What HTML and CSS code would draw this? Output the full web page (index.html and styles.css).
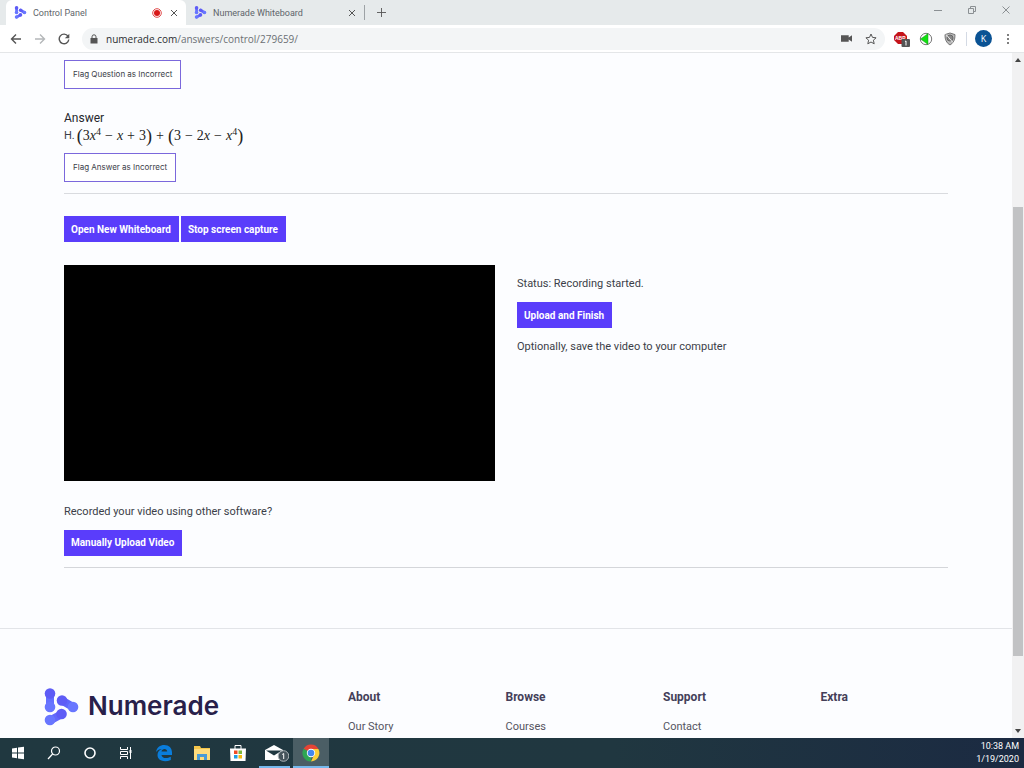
FILE: index.html
```html
<!DOCTYPE html>
<html lang="en">
<head>
<meta charset="utf-8">
<title>Control Panel</title>
<link rel="stylesheet" href="styles.css">
</head>
<body>
<svg class="defs" aria-hidden="true">
  <symbol id="mark" viewBox="0 0 35 38">
    <g fill="none" stroke-linecap="round" stroke-width="8">
      <path d="M6 6v12.500" stroke="#6470ff"/>
      <path d="M18 12.500l11 6.500" stroke="#5f66fb"/>
      <path d="M6 32.500l11-6" stroke="#6268fb"/>
    </g>
    <g fill="#5e5cf6"><circle cx="6" cy="5.500" r="5.300"/><circle cx="18" cy="12.500" r="5.300"/><circle cx="17.500" cy="26" r="5.300"/></g>
    <g fill="#6876ff"><circle cx="6" cy="19" r="5.300"/><circle cx="29" cy="19" r="5.300"/><circle cx="6" cy="32" r="5.300"/></g>
  </symbol>
</svg>
<header class="tabs">
  <div class="tab active">
    <svg class="fav"><use href="#mark"/></svg><span class="tab-title">Control Panel</span>
    <svg class="rec" viewBox="0 0 10 10"><circle cx="5" cy="5" r="4.300" fill="#fff" stroke="#e04848"/><circle cx="5" cy="5" r="3" fill="#d81818"/></svg>
    <button class="icon close" aria-label="Close Control Panel"><svg viewBox="0 0 8 8"><path d="M1 1l6 6M7 1L1 7"/></svg></button>
  </div>
  <div class="tab second">
    <svg class="fav"><use href="#mark"/></svg><span class="tab-title">Numerade Whiteboard</span>
    <button class="icon close" aria-label="Close Numerade Whiteboard"><svg viewBox="0 0 8 8"><path d="M1 1l6 6M7 1L1 7"/></svg></button>
  </div>
  <button class="icon plus" aria-label="New tab"><svg viewBox="0 0 10 10"><path d="M5 0v10M0 5h10"/></svg></button>
  <div class="window-controls">
    <button class="icon" aria-label="Minimize"><svg viewBox="0 0 10 10"><path d="M1 5.500h8"/></svg></button>
    <button class="icon" aria-label="Restore"><svg viewBox="0 0 10 10"><path d="M1.500 3.500h5v5h-5zM3.500 3V1.500h5v5H7"/></svg></button>
    <button class="icon" aria-label="Close window"><svg viewBox="0 0 10 10"><path d="M1.500 1.500l7 7M8.500 1.500l-7 7"/></svg></button>
  </div>
</header>
<nav class="toolbar">
  <button class="icon nav" aria-label="Back"><svg viewBox="0 0 12 12"><path d="M11 6H1.500M6 1.500L1.500 6 6 10.500"/></svg></button>
  <button class="icon nav dim" aria-label="Forward"><svg viewBox="0 0 12 12"><path d="M1 6h9.500M6 1.500L10.500 6 6 10.500"/></svg></button>
  <button class="icon nav" aria-label="Reload"><svg viewBox="0 0 12 12"><path d="M10 3.200A4.800 4.800 0 1 0 10.800 6.500"/><path d="M11.300.8v4.500H6.800z" class="solid"/></svg></button>
  <div class="address">
    <svg class="lock" viewBox="0 0 8 10"><path d="M2 4V2.800a2 2 0 0 1 4 0V4" fill="none" stroke="#555"/><path d="M.5 4h7v5.500h-7z" fill="#555"/></svg>
    <a class="url" href="#"><b>numerade.com</b>/answers/control/279659/</a>
    <svg class="cam" viewBox="0 0 10 8"><path d="M0 1h7v2l3-2v6L7 5v2H0z" fill="#555"/></svg>
    <button class="icon" aria-label="Bookmark"><svg viewBox="0 0 12 12"><path d="M6 1l1.500 3.400 3.600.4-2.700 2.400.8 3.600L6 9l-3.200 1.800.8-3.600L.9 4.800l3.600-.4z" stroke-width="1"/></svg></button>
  </div>
  <div class="extensions">
    <button class="icon ext" aria-label="Ad blocker"><svg viewBox="0 0 16 16"><path d="M4 1h5l4 4v4l-4 4H4L0 9V5z" fill="#c5141b" stroke="none"/><text x="1" y="9" class="abp">ABP</text><rect x="7.500" y="8" width="8.500" height="8" rx="1" fill="#555" stroke="none"/><path d="M11 10.500l1-.5v4.500" stroke="#fff"/></svg></button>
    <button class="icon ext" aria-label="Audio"><svg viewBox="0 0 16 16"><circle cx="8" cy="8" r="5.700" fill="#fff" stroke="#777"/><path d="M10 2.500v11L6 10.500 2.500 8 6 5.500z" fill="#10e010" stroke="#189018" stroke-width=".5"/></svg></button>
    <button class="icon ext" aria-label="Shield"><svg viewBox="0 0 16 16"><path d="M8 2l5 1.600c.2 5-1.500 8.400-5 10.400-3.500-2-5.200-5.400-5-10.400z" fill="#bbb" stroke="#777"/><circle cx="8" cy="7" r="3" fill="#888" stroke="#666"/><path d="M4 3.500l7 8" stroke="#eee"/></svg></button>
    <span class="divider"></span>
    <button class="avatar">K</button>
    <button class="icon more" aria-label="Menu"><svg viewBox="0 0 4 12"><g fill="#555" stroke="none"><circle cx="2" cy="2" r="1"/><circle cx="2" cy="6" r="1"/><circle cx="2" cy="10" r="1"/></g></svg></button>
  </div>
</nav>
<div class="viewport">
  <div class="page">
    <main class="content">
      <button class="flag">Flag Question as Incorrect</button>
      <section class="answer">
        <h2>Answer</h2>
        <p class="formula">H. <span class="math"><span class="par">(</span>3<i>x</i><sup>4</sup><span class="op">−</span><i>x</i><span class="op">+</span>3<span class="par">)</span><span class="op">+</span><span class="par">(</span>3<span class="op">−</span>2<i>x</i><span class="op">−</span><i>x</i><sup>4</sup><span class="par">)</span></span></p>
        <button class="flag">Flag Answer as Incorrect</button>
      </section>
      <div class="actions">
        <button class="primary">Open New Whiteboard</button>
        <button class="primary">Stop screen capture</button>
      </div>
      <div class="recorder">
        <div class="video"></div>
        <div class="status">
          <p>Status: Recording started.</p>
          <button class="primary">Upload and Finish</button>
          <p>Optionally, save the video to your computer</p>
        </div>
      </div>
      <section class="manual">
        <p>Recorded your video using other software?</p>
        <button class="primary">Manually Upload Video</button>
      </section>
    </main>
    <footer class="footer">
      <a class="brand" href="#"><svg class="logo"><use href="#mark"/></svg><span>Numerade</span></a>
      <div class="col"><h3>About</h3><a href="#">Our Story</a></div>
      <div class="col"><h3>Browse</h3><a href="#">Courses</a></div>
      <div class="col"><h3>Support</h3><a href="#">Contact</a></div>
      <div class="col"><h3>Extra</h3></div>
    </footer>
  </div>
  <div class="scroll">
    <svg viewBox="0 0 6 4"><path d="M0 4l3-4 3 4z"/></svg>
    <div class="track"><div class="thumb"></div></div>
    <svg viewBox="0 0 6 4"><path d="M0 0l3 4 3-4z"/></svg>
  </div>
</div>
<div class="taskbar">
  <button class="task" aria-label="Start"><svg viewBox="0 0 18 18"><path d="M3 4.500l5-.7v4.700H3zM9 3.600l6-.8v5.700H9zM3 9.500h5v4.700l-5-.7zM9 9.500h6v5.700l-6-.8z" fill="#fff"/></svg></button>
  <button class="task" aria-label="Search"><svg viewBox="0 0 18 18"><g fill="none" stroke="#fff" stroke-width="1.200"><circle cx="10.500" cy="7" r="4"/><path d="M7.600 10L3 15"/></g></svg></button>
  <button class="task" aria-label="Cortana"><svg viewBox="0 0 18 18"><circle cx="9" cy="9" r="5" fill="none" stroke="#fff" stroke-width="1.600"/></svg></button>
  <button class="task" aria-label="Task view"><svg viewBox="0 0 18 18"><g fill="none" stroke="#fff"><path d="M3.500 3v2.500h7V3M3.500 15v-2.500h7V15M3.500 7.500h7v3h-7zM13.500 3v12"/></g><path d="M12.500 6h2v3h-2z" fill="#fff"/></svg></button>
  <button class="task app" aria-label="Edge"><svg viewBox="0 0 18 18"><path d="M1 8C1.800 3.500 5 1 9.300 1 14 1 17 4 17 8.500V11H6.500c.3 3.500 5.500 4 9.300 1.700v3.200C10 18.700 2.500 17 2.500 11c0-3 1.700-5 4.300-6C4.500 5 2.500 6 1 8zm5.500-.4h5.700C12.200 4 6.800 4.300 6.500 7.600z" fill="#0a7ddb"/></svg></button>
  <button class="task" aria-label="File Explorer"><svg viewBox="0 0 18 18"><path d="M1 2h6l1 2h9v12H1z" fill="#f5c64a"/><path d="M1 5h16v11H1z" fill="#ffdc7c"/><path d="M4 16v-6h10v6h-3v-3H7v3z" fill="#4a9bd6"/></svg></button>
  <button class="task" aria-label="Store"><svg viewBox="0 0 18 18"><path d="M6 5V1.500h6V5" fill="none" stroke="#fff"/><path d="M1 4.500h16L16.500 17h-15z" fill="#fff"/><path d="M5 6.500h3.500V10H5z" fill="#f04c25"/><path d="M9.500 6.500H13V10H9.500z" fill="#7eb93c"/><path d="M5 11h3.500v3.500H5z" fill="#209fe5"/><path d="M9.500 11H13v3.500H9.500z" fill="#f5b90f"/></svg></button>
  <button class="task open" aria-label="Mail"><svg class="wide" viewBox="0 0 28 18"><path d="M4 6l9-5 9 5v10H4z" fill="#fff"/><path d="M5 6.500h16l-8 5z" fill="#203840"/><circle cx="22.500" cy="12" r="5.300" fill="#46545c" stroke="#aab2b6"/><path d="M21.200 10.500l1.500-1v5.500" fill="none" stroke="#fff"/></svg></button>
  <button class="task open current" aria-label="Chrome"><svg viewBox="0 0 18 18"><path d="M9 9L1.600 4.700a8.500 8.500 0 0 1 14.800 0z" fill="#e54435"/><path d="M9 9L1.600 4.700A8.500 8.500 0 0 0 9 17.500z" fill="#2fa653"/><path d="M9 5h7.400A8.500 8.500 0 0 1 9 17.500l3-6.500z" fill="#fbcf38"/><circle cx="9" cy="9" r="4.200" fill="#fff"/><circle cx="9" cy="9" r="3.300" fill="#4388ef"/></svg></button>
  <div class="clock"><span>10:38 AM</span><span>1/19/2020</span></div>
</div>
</body>
</html>
```
FILE: styles.css
```css
* { box-sizing: border-box; }
body {
  margin: 0;
  height: 100vh;
  display: flex;
  flex-direction: column;
  overflow: hidden;
  font-family: "Open Sans", sans-serif;
  color: #3b3e48;
  background: #fcfdff;
}
h2, h3, p { margin: 0; font-weight: 400; }
a { color: inherit; text-decoration: none; }
button { border: 0; padding: 0; margin: 0; background: none; font: inherit; color: inherit; }
svg { display: block; flex: none; }
.defs { position: absolute; width: 0; height: 0; }

.tabs { display: flex; height: 25px; background: #e6eaeb; flex: none; }
.tab { display: flex; align-items: center; font-family: Roboto, sans-serif; font-size: 9px; color: #60656a; }
.active { width: 180px; margin-left: 6px; padding: 0 8px; background: #fff; border-radius: 6px 6px 0 0; }
.second { width: 179px; padding: 0 8px; border-right: 1px solid #9da2a5; height: 15px; align-self: center; }
.fav { width: 13px; height: 13px; margin-right: 6px; }
.tab-title { flex: 1; white-space: nowrap; }
.rec { width: 10px; height: 10px; margin-right: 8px; }
.icon svg { width: 12px; height: 12px; fill: none; stroke: #555; stroke-width: 1.400; }
.icon.close svg { width: 8px; height: 8px; stroke-width: 1; }
.plus { margin-left: 12px; }
.plus svg { width: 9px; height: 9px; stroke-width: 1; }
.window-controls { display: flex; gap: 24px; margin-left: auto; padding: 5px 13px 0 0; align-items: flex-start; }
.window-controls svg { width: 10px; height: 10px; stroke: #8b9093; stroke-width: 1; }

.toolbar { display: flex; align-items: center; height: 28px; padding: 0 14px 0 10px; background: #fff; border-bottom: 1px solid #e4e6e8; flex: none; }
.nav { margin-right: 12px; }
.dim svg { stroke: #b4b7b9; }
.icon .solid { fill: #555; stroke: none; }
.address { display: flex; flex: 1; align-items: center; height: 22px; padding: 0 8px; background: #f3f5f6; border-radius: 11px; }
.lock { width: 8px; height: 10px; margin-right: 8px; }
.url { flex: 1; font-size: 10px; color: #6b7074; }
.url b { font-weight: 400; color: #2b2e31; }
.cam { width: 11px; height: 9px; margin-right: 13px; }
.extensions { display: flex; align-items: center; margin-left: 9px; }
.ext { margin-right: 8px; }
.ext svg { width: 16px; height: 16px; stroke-width: 1; }
.abp { font: bold 5px "Liberation Sans", sans-serif; fill: #fff; stroke: none; }
.divider { width: 1px; height: 14px; background: #d4dae4; margin-right: 8px; }
.avatar { width: 17px; height: 17px; border-radius: 50%; background: #0b5394; color: #fff; font-size: 9px; line-height: 17px; margin-right: 14px; }
.more svg { width: 4px; height: 12px; }

.viewport { flex: 1; min-height: 0; display: flex; overflow: hidden; }
.page { flex: 1; overflow: hidden; }
.content { padding: 7px 64px 60px; border-bottom: 1px solid #e2e4e8; font-family: Roboto, sans-serif; font-size: 11px; line-height: 18px; }
.flag { display: block; height: 29px; padding: 0 8px 2px; border: 1px solid #7b68dc; background: #fff; font-family: Inter, sans-serif; font-size: 8px; }
.answer { margin-top: 20px; padding-bottom: 11px; border-bottom: 1px solid #d9dbdf; }
.answer h2 { font-size: 12px; line-height: 18px; color: #25272d; }
.formula { display: flex; align-items: center; gap: 2px; height: 18px; margin-bottom: 8px; white-space: nowrap; }
.math { display: flex; align-items: center; font: 14px/18px "Liberation Serif", serif; color: #222; }
.par { font-size: 18px; }
.op { margin: 0 4px; }
sup { font-size: 10px; line-height: 10px; align-self: flex-start; }
.actions { display: flex; gap: 2px; margin-top: 22px; }
.primary { height: 26px; padding: 0 8px 0 7px; background: #5a3dfb; color: #fff; font: 700 10px Roboto, sans-serif; white-space: nowrap; }
.recorder { display: grid; grid-template-columns: 1fr 1fr; gap: 22px; margin-top: 23px; }
.video { aspect-ratio: 2 / 1; background: #000; }
.status { padding-top: 10px; }
.status .primary { margin: 9px 0 10px; }
.manual { margin-top: 22px; padding-bottom: 11px; border-bottom: 1px solid #d4d6da; }
.manual .primary { margin-top: 9px; display: block; }

.footer { display: grid; grid-template-columns: 304px repeat(4, 1fr); padding: 58px 34px 0 44px; font-family: Roboto, sans-serif; }
.brand { display: flex; gap: 9px; color: #28204a; font: 600 26px/38px Inter, sans-serif; }
.logo { width: 35px; height: 40px; }
.col h3 { font-size: 12px; font-weight: 700; line-height: 20px; color: #443f59; }
.col a { display: block; margin-top: 11px; font-size: 11px; line-height: 18px; color: #555461; }

.scroll { width: 12px; display: flex; flex-direction: column; align-items: center; background: #f1f1f2; padding: 5px 0; }
.scroll svg { width: 6px; height: 4px; fill: #444; }
.track { flex: 1; width: 10px; padding-top: 145px; }
.thumb { height: 86%; background: #c1c2c4; }

.taskbar { display: flex; height: 30px; flex: none; background: linear-gradient(90deg, #203840 0%, #203740 60%, #1b2a42 100%); }
.task { width: 36px; display: grid; place-items: center; }
.task svg { width: 18px; height: 18px; }
.task .wide { width: 28px; }
.task.app { width: 40px; }
.task.open { border-bottom: 2px solid #76b9ed; padding-top: 2px; width: 31px; margin-left: 3px; }
.task.open.current { width: 36px; background: #4b5e65; }
.clock { margin-left: auto; padding: 2px 5px 0 0; display: flex; flex-direction: column; align-items: flex-end; color: #fff; font: 9px/13px Roboto, sans-serif; }
```
